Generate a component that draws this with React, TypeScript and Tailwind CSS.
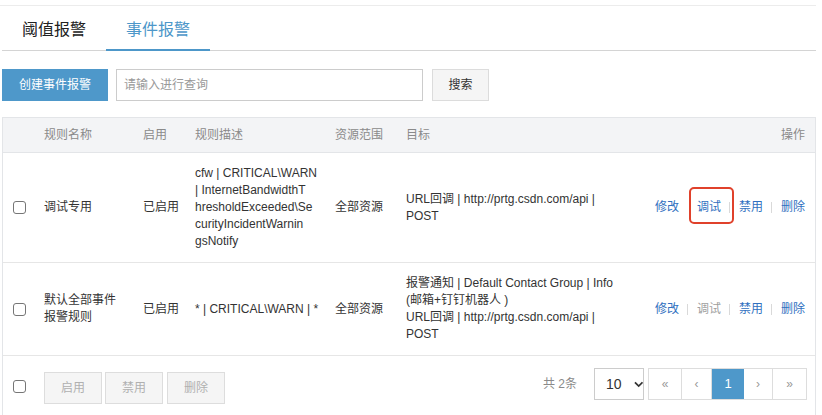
import React from "react";

const FONT = "font-['Liberation_Sans','Noto_Sans_CJK_SC',sans-serif]";

function Checkbox() {
  return <span className="block w-[13px] h-[13px] rounded-[3px] border border-[#767676] bg-white" />;
}

function Sep() {
  return <span className="inline-block w-px h-[11px] bg-[#d9d9d9] ml-[8px] mr-[9px]" />;
}

const GRID = "grid grid-cols-[41px_99px_52px_140px_71px_230px_1fr]";

export default function App() {
  return (
    <div className={`${FONT} w-[822px] h-[415px] overflow-hidden bg-white text-[12px] text-[#333]`}>
      <div className="pt-[5px]">
        <div className="w-[816px] border-t border-[#ececec]" />
      </div>
      {/* tabs */}
      <div className="ml-[2px] w-[814px] h-[45px] border-b border-[#d4d4d4] flex">
        <div className="h-[45px] px-[20px] pt-[13px] text-[16px] leading-[22px] text-[#222] border-b-2 border-transparent">
          阈值报警
        </div>
        <div className="h-[45px] px-[20px] pt-[13px] text-[16px] leading-[22px] text-[#4d97c9] border-b-2 border-[#4d97c9]">
          事件报警
        </div>
      </div>
      {/* toolbar */}
      <div className="mt-[18px] flex items-center">
        <button className="ml-[2px] w-[106px] h-[32px] bg-[#4e98ca] text-white text-[12px]">创建事件报警</button>
        <div className="ml-[8px] w-[307px] h-[32px] border border-[#cccccc] px-[7px] flex items-center text-[#999]">
          请输入进行查询
        </div>
        <button className="ml-[9px] w-[57px] h-[32px] bg-[#f5f5f5] border border-[#dcdcdc] text-[#333] text-[12px]">搜索</button>
      </div>
      {/* table */}
      <div className="mt-[16px] ml-[2px] w-[814px] border border-b-0 border-[#e3e5e8]">
        <div className={`${GRID} h-[35px] bg-[#f3f4f6] border-b border-[#e3e5e8] items-center text-[#8a8a8a] leading-[17px]`}>
          <div />
          <div>规则名称</div>
          <div>启用</div>
          <div>规则描述</div>
          <div>资源范围</div>
          <div>目标</div>
          <div className="text-right pr-[10px]">操作</div>
        </div>
        {/* row 1 */}
        <div className={`${GRID} h-[110px] border-b border-[#e6e6e6] items-center leading-[17px]`}>
          <div className="pl-[10px]"><Checkbox /></div>
          <div>调试专用</div>
          <div>已启用</div>
          <div>
            <div>{"cfw | CRITICAL\\WARN"}</div>
            <div>{"| InternetBandwidthT"}</div>
            <div>{"hresholdExceeded\\Se"}</div>
            <div>{"curityIncidentWarnin"}</div>
            <div>{"gsNotify"}</div>
          </div>
          <div>全部资源</div>
          <div className="whitespace-nowrap">
            <div>URL回调 | http://prtg.csdn.com/api |</div>
            <div>POST</div>
          </div>
          <div className="flex items-center justify-end pr-[10px] text-[#3070c0] whitespace-nowrap">
            <span>修改</span>
            <span className="ml-[18px] relative">
              调试
              <span className="absolute left-[-8px] top-[-12px] w-[45px] h-[37px] border-2 border-[#e0412b] rounded-[5px]" />
            </span>
            <Sep />
            <span>禁用</span>
            <Sep />
            <span>删除</span>
          </div>
        </div>
        {/* row 2 */}
        <div className={`${GRID} h-[93px] border-b border-[#e6e6e6] items-center leading-[17px]`}>
          <div className="pl-[10px]"><Checkbox /></div>
          <div>
            <div>默认全部事件</div>
            <div>报警规则</div>
          </div>
          <div>已启用</div>
          <div className="whitespace-nowrap">{"* | CRITICAL\\WARN | *"}</div>
          <div>全部资源</div>
          <div className="whitespace-nowrap">
            <div>报警通知 | Default Contact Group | Info</div>
            <div>(邮箱+钉钉机器人 )</div>
            <div>URL回调 | http://prtg.csdn.com/api |</div>
            <div>POST</div>
          </div>
          <div className="flex items-center justify-end pr-[10px] text-[#3070c0] whitespace-nowrap">
            <span>修改</span>
            <Sep />
            <span className="text-[#a0a0a0]">调试</span>
            <Sep />
            <span>禁用</span>
            <Sep />
            <span>删除</span>
          </div>
        </div>
        {/* footer */}
        <div className="h-[70px] flex items-start">
          <div className="w-[41px] pl-[10px] pt-[24px]"><Checkbox /></div>
          <div className="flex pt-[16px]">
            <button className="w-[58px] h-[32px] bg-[#f5f5f5] border border-[#dddddd] text-[#b0b0b0] text-[12px]">启用</button>
            <button className="ml-[3px] w-[58px] h-[32px] bg-[#f5f5f5] border border-[#dddddd] text-[#b0b0b0] text-[12px]">禁用</button>
            <button className="ml-[4px] w-[58px] h-[32px] bg-[#f5f5f5] border border-[#dddddd] text-[#b0b0b0] text-[12px]">删除</button>
          </div>
          <div className="ml-auto mr-[8px] pt-[12px] flex items-center">
            <span className="text-[#8a8a8a] mr-[17px]">共 2条</span>
            <div className="w-[50px] h-[32px] border border-[#cccccc] flex items-center pl-[11px] text-[14px] text-[#333]">
              <span>10</span>
              <svg className="ml-[12px]" width="10" height="7" viewBox="0 0 10 7">
                <path d="M1 1.2 L5 5.2 L9 1.2" fill="none" stroke="#333" strokeWidth="1.8" />
              </svg>
            </div>
            <div className="ml-[4px] flex h-[32px] border border-[#dddddd] text-[#999]">
              <div className="w-[33px] flex items-center justify-center border-r border-[#dddddd]">«</div>
              <div className="w-[30px] flex items-center justify-center border-r border-[#dddddd]">‹</div>
              <div className="w-[32px] flex items-center justify-center bg-[#4e98ca] text-white text-[13px]">1</div>
              <div className="w-[29px] flex items-center justify-center border-r border-[#dddddd]">›</div>
              <div className="w-[33px] flex items-center justify-center">»</div>
            </div>
          </div>
        </div>
      </div>
    </div>
  );
}
